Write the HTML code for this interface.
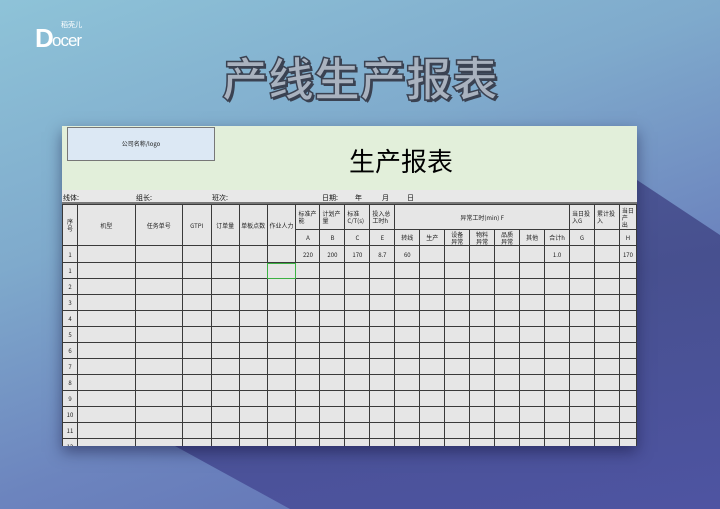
<!DOCTYPE html>
<html><head><meta charset="utf-8"><style>
*{margin:0;padding:0;box-sizing:border-box}
body{width:720px;height:509px;overflow:hidden;position:relative;font-family:"Liberation Sans","Noto Sans CJK SC",sans-serif;
background:linear-gradient(160deg,#8ec3d8 0%,#7faacc 35%,#6c84be 65%,#5e6bb2 100%);}
.shade{position:absolute;left:0;top:0;width:720px;height:509px;background:linear-gradient(170deg,#56649f 0%,#47508f 60%,#4e54a2 100%);
clip-path:polygon(637px 180px,720px 235px,720px 509px,290px 509px,175px 446px,637px 446px);}
.logo{position:absolute;left:35px;top:20px;color:#fff;white-space:nowrap}
.logo .d{position:absolute;left:0;top:3px;font:bold 26px "Liberation Sans",sans-serif;}
.logo .o{position:absolute;left:17px;top:11px;font:17px "Liberation Sans",sans-serif;letter-spacing:-1px}
.logo .c{position:absolute;left:26px;top:0;font:7px "Noto Sans CJK SC",sans-serif;white-space:nowrap}
.title{position:absolute;left:222px;top:44px;font:bold 46px "Noto Sans CJK SC",sans-serif;color:#a9b2bf;white-space:nowrap;
-webkit-text-stroke:1.5px #3a4252;text-shadow:2px 2px 0 #3a4252;}
.sheet{position:absolute;left:62px;top:126px;width:575px;height:320px;overflow:hidden;background:#e6e6e6;box-shadow:0 6px 14px rgba(20,20,60,.5)}
.band{position:absolute;left:0;top:0;width:575px;height:64px;background:#e2efda}
.lbox{position:absolute;left:5px;top:1px;width:148px;height:34px;background:#dce8f4;border:1px solid #777;font:6px "Noto Sans CJK SC",sans-serif;text-align:center;line-height:32px;color:#222}
.big{position:absolute;left:287px;top:16px;font:26px "Noto Sans CJK SC",sans-serif;color:#000}
.info{position:absolute;top:64px;left:0;width:575px;height:14px;background:#e8e8e8;font:7px "Noto Sans CJK SC",sans-serif;color:#111;border-bottom:2px solid #777}
.info span{position:absolute;top:3px}
table{position:absolute;left:0;top:78px;border-collapse:collapse;table-layout:fixed;font:6px "Noto Sans CJK SC",sans-serif;color:#222}
td{border:1px solid #3a3a3a;text-align:center;vertical-align:middle;overflow:hidden;line-height:7px;padding:0}
td.l{text-align:left;padding-left:2px}
td.g{outline:1px solid #3cb043;outline-offset:-1px}
</style></head><body>
<div class="shade"></div>
<div class="logo"><span class="d">D</span><span class="o">ocer</span><span class="c">稻壳儿</span></div>
<div class="title">产线生产报表</div>
<div class="sheet">
<div class="band"></div>
<div class="lbox">公司名称/logo</div>
<div class="big">生产报表</div>
<div class="info"><span style="left:1px">线体:</span><span style="left:74px">组长:</span><span style="left:150px">班次:</span><span style="left:260px">日期:</span><span style="left:293px">年</span><span style="left:320px">月</span><span style="left:345px">日</span></div>
<table>
<colgroup><col style="width:15px"><col style="width:58px"><col style="width:47px"><col style="width:29px"><col style="width:28px"><col style="width:28px"><col style="width:29px"><col style="width:24px"><col style="width:25px"><col style="width:25px"><col style="width:25px"><col style="width:25px"><col style="width:25px"><col style="width:25px"><col style="width:25px"><col style="width:25px"><col style="width:25px"><col style="width:25px"><col style="width:25px"><col style="width:25px"><col style="width:17px"></colgroup>
<tr style="height:25px"><td rowspan="2">序<br>号</td><td rowspan="2">机型</td><td rowspan="2">任务单号</td><td rowspan="2">GTPI</td><td rowspan="2">订单量</td><td rowspan="2">单板点数</td><td rowspan="2">作业人力</td><td class="l">标准产<br>能</td><td class="l">计划产<br>量</td><td class="l">标准<br>C/T(s)</td><td class="l">投入总<br>工时h</td><td colspan="7">异常工时(min) F</td><td class="l">当日投<br>入G</td><td class="l">累计投<br>入</td><td class="l">当日产<br>出</td></tr>
<tr style="height:16px"><td>A</td><td>B</td><td>C</td><td>E</td><td>转线</td><td>生产</td><td>设备<br>异常</td><td>物料<br>异常</td><td>品质<br>异常</td><td>其他</td><td>合计h</td><td>G</td><td></td><td>H</td></tr>
<tr style="height:17px"><td>1</td><td></td><td></td><td></td><td></td><td></td><td></td><td>220</td><td>200</td><td>170</td><td>8.7</td><td>60</td><td></td><td></td><td></td><td></td><td></td><td>1.0</td><td></td><td></td><td>170</td></tr>
<tr style="height:16px"><td>1</td><td></td><td></td><td></td><td></td><td></td><td class="g"></td><td></td><td></td><td></td><td></td><td></td><td></td><td></td><td></td><td></td><td></td><td></td><td></td><td></td><td></td></tr>
<tr style="height:16px"><td>2</td><td></td><td></td><td></td><td></td><td></td><td></td><td></td><td></td><td></td><td></td><td></td><td></td><td></td><td></td><td></td><td></td><td></td><td></td><td></td><td></td></tr>
<tr style="height:16px"><td>3</td><td></td><td></td><td></td><td></td><td></td><td></td><td></td><td></td><td></td><td></td><td></td><td></td><td></td><td></td><td></td><td></td><td></td><td></td><td></td><td></td></tr>
<tr style="height:16px"><td>4</td><td></td><td></td><td></td><td></td><td></td><td></td><td></td><td></td><td></td><td></td><td></td><td></td><td></td><td></td><td></td><td></td><td></td><td></td><td></td><td></td></tr>
<tr style="height:16px"><td>5</td><td></td><td></td><td></td><td></td><td></td><td></td><td></td><td></td><td></td><td></td><td></td><td></td><td></td><td></td><td></td><td></td><td></td><td></td><td></td><td></td></tr>
<tr style="height:16px"><td>6</td><td></td><td></td><td></td><td></td><td></td><td></td><td></td><td></td><td></td><td></td><td></td><td></td><td></td><td></td><td></td><td></td><td></td><td></td><td></td><td></td></tr>
<tr style="height:16px"><td>7</td><td></td><td></td><td></td><td></td><td></td><td></td><td></td><td></td><td></td><td></td><td></td><td></td><td></td><td></td><td></td><td></td><td></td><td></td><td></td><td></td></tr>
<tr style="height:16px"><td>8</td><td></td><td></td><td></td><td></td><td></td><td></td><td></td><td></td><td></td><td></td><td></td><td></td><td></td><td></td><td></td><td></td><td></td><td></td><td></td><td></td></tr>
<tr style="height:16px"><td>9</td><td></td><td></td><td></td><td></td><td></td><td></td><td></td><td></td><td></td><td></td><td></td><td></td><td></td><td></td><td></td><td></td><td></td><td></td><td></td><td></td></tr>
<tr style="height:16px"><td>10</td><td></td><td></td><td></td><td></td><td></td><td></td><td></td><td></td><td></td><td></td><td></td><td></td><td></td><td></td><td></td><td></td><td></td><td></td><td></td><td></td></tr>
<tr style="height:16px"><td>11</td><td></td><td></td><td></td><td></td><td></td><td></td><td></td><td></td><td></td><td></td><td></td><td></td><td></td><td></td><td></td><td></td><td></td><td></td><td></td><td></td></tr>
<tr style="height:16px"><td>12</td><td></td><td></td><td></td><td></td><td></td><td></td><td></td><td></td><td></td><td></td><td></td><td></td><td></td><td></td><td></td><td></td><td></td><td></td><td></td><td></td></tr>
</table>
</div>
</body></html>
